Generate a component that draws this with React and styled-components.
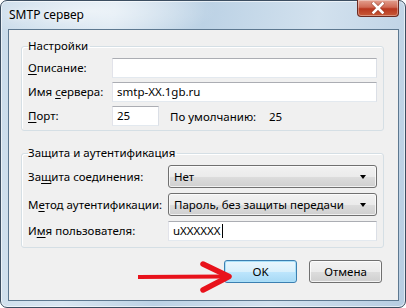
import React from "react";
import styled, { createGlobalStyle } from "styled-components";

const GlobalStyle = createGlobalStyle`
  html, body {
    margin: 0;
    padding: 0;
    background: #ffffff;
  }
  body {
    font-family: "Noto Sans", "Liberation Sans", sans-serif;
    font-size: 11.5px;
    color: #000;
  }
`;

const Frame = styled.div`
  box-sizing: border-box;
  width: 406px;
  height: 308px;
  border: 1px solid #3c4e61;
  border-radius: 7px;
  background:
    radial-gradient(ellipse 180px 40px at 90px 10px, rgba(255, 255, 255, 0.55), rgba(255, 255, 255, 0) 70%),
    linear-gradient(100deg, #c9dbea 0%, #d9e6f1 25%, #bcd2e5 45%, #d2e1ee 70%, #b7cde2 100%);
  box-shadow: inset 0 0 0 1px rgba(255, 255, 255, 0.6);
  padding: 0 6px 6px 7px;
  display: flex;
  flex-direction: column;
`;

const TitleBar = styled.div`
  height: 28px;
  display: flex;
  align-items: flex-start;
  justify-content: space-between;
`;

const Title = styled.div`
  padding: 6px 0 0 1px;
  font-size: 12px;
  line-height: 16px;
  color: #000;
  text-shadow: 0 0 6px rgba(255, 255, 255, 0.9);
`;

const CloseButton = styled.div`
  width: 42px;
  height: 17px;
  margin-top: -1px;
  box-sizing: border-box;
  border: 1px solid #6b2b22;
  border-top: none;
  border-radius: 0 0 4px 4px;
  background: linear-gradient(180deg, #e3a090 0%, #d06a55 45%, #b8371f 55%, #c85a38 100%);
  box-shadow: inset 0 0 0 1px rgba(255, 255, 255, 0.35);
  display: flex;
  align-items: center;
  justify-content: center;
`;

const Client = styled.div`
  position: relative;
  box-sizing: border-box;
  width: 391px;
  height: 272px;
  border: 1px solid #5d7890;
  background: #f0f0f0;
  padding: 8px 14px 0 12px;
  display: flex;
  flex-direction: column;
`;

const Group = styled.fieldset`
  margin: ${(p) => p.$top || 0}px 0 0 0;
  padding: 4px 6px ${(p) => p.$bottom || 4}px 6px;
  border: 1px solid #d5dfe5;
  border-radius: 3px;
  box-shadow: inset 1px 1px 0 #ffffff;
  min-width: 0;
`;

const Legend = styled.legend`
  padding: 0 2px 0 0;
  margin-left: 0;
  font-size: 11.5px;
  line-height: 16px;
  color: #000;
`;

const Rows = styled.div`
  display: grid;
  grid-template-columns: ${(p) => p.$label}px 1fr;
  row-gap: ${(p) => p.$gap}px;
  align-items: center;
`;

const Label = styled.div`
  font-size: 11.5px;
  line-height: 16px;
  white-space: nowrap;
`;

const Key = styled.u`
  text-decoration: underline;
  text-underline-offset: 2px;
`;

const TextBox = styled.div`
  box-sizing: border-box;
  height: 20px;
  width: ${(p) => (p.$width ? `${p.$width}px` : "auto")};
  background: #ffffff;
  border: 1px solid #e3e9ef;
  border-top-color: #abadb3;
  border-left-color: #e2e3ea;
  border-right-color: #dbdfe6;
  padding: 0 4px;
  display: flex;
  align-items: center;
  font-size: 11.5px;
  line-height: 16px;
  white-space: nowrap;
`;

const Caret = styled.span`
  display: inline-block;
  width: 1px;
  height: 14px;
  background: #000;
  margin-left: 1px;
`;

const PortLine = styled.div`
  display: flex;
  align-items: center;
`;

const DefaultLabel = styled.span`
  margin-left: 11px;
  width: 99px;
`;

const Select = styled.div`
  box-sizing: border-box;
  height: 23px;
  border: 1px solid #707070;
  border-radius: 3px;
  background: linear-gradient(180deg, #f2f2f2 0%, #ebebeb 50%, #dddddd 51%, #cfcfcf 100%);
  box-shadow: inset 0 0 0 1px rgba(255, 255, 255, 0.7);
  padding: 0 10px 0 5px;
  display: flex;
  align-items: center;
  justify-content: space-between;
  font-size: 11.5px;
  line-height: 16px;
  white-space: nowrap;
`;

const Arrow = styled.span`
  width: 0;
  height: 0;
  border-left: 3.5px solid transparent;
  border-right: 3.5px solid transparent;
  border-top: 4px solid #000;
  margin-top: 1px;
`;

const ButtonRow = styled.div`
  margin-top: 12px;
  padding-right: 2px;
  display: flex;
  justify-content: flex-end;
  gap: 12px;
`;

const Button = styled.div`
  box-sizing: border-box;
  width: 73px;
  height: 23px;
  border: 1px solid ${(p) => (p.$default ? "#3c7fb1" : "#707070")};
  border-radius: 3px;
  background: ${(p) =>
    p.$default
      ? "linear-gradient(180deg, #eaf6fd 0%, #d9f0fc 50%, #bee6fd 51%, #a7d9f5 100%)"
      : "linear-gradient(180deg, #f2f2f2 0%, #ebebeb 50%, #dddddd 51%, #cfcfcf 100%)"};
  box-shadow: inset 0 0 0 1px ${(p) => (p.$default ? "#a9e0f9" : "rgba(255,255,255,0.75)")};
  display: flex;
  align-items: center;
  justify-content: center;
  font-size: 11.5px;
  line-height: 16px;
`;

const Pointer = styled.svg`
  position: absolute;
  left: 128px;
  top: 231px;
  pointer-events: none;
`;

export default function App() {
  return (
    <>
      <GlobalStyle />
      <Frame>
        <TitleBar>
          <Title>SMTP сервер</Title>
          <CloseButton>
            <svg width="14" height="12" viewBox="0 0 14 12">
              <path d="M2.5 1.5 L11.5 10.5 M11.5 1.5 L2.5 10.5" stroke="#7a2a1a" strokeWidth="4" strokeLinecap="square" opacity="0.45" />
              <path d="M2.5 1.5 L11.5 10.5 M11.5 1.5 L2.5 10.5" stroke="#ffffff" strokeWidth="2.6" strokeLinecap="square" />
            </svg>
          </CloseButton>
        </TitleBar>
        <Client>
          <Group $bottom={4}>
            <Legend>Настройки</Legend>
            <Rows $label={84} $gap={4}>
              <Label><Key>О</Key>писание:</Label>
              <TextBox />
              <Label>Имя <Key>с</Key>ервера:</Label>
              <TextBox>smtp-XX.1gb.ru</TextBox>
              <Label><Key>П</Key>орт:</Label>
              <PortLine>
                <TextBox $width={47}>25</TextBox>
                <DefaultLabel>По умолчанию:</DefaultLabel>
                <span>25</span>
              </PortLine>
            </Rows>
          </Group>
          <Group $top={14} $bottom={6}>
            <Legend>Защита и аутентификация</Legend>
            <Rows $label={140} $gap={5}>
              <Label>За<Key>щ</Key>ита соединения:</Label>
              <Select>
                <span>Нет</span>
                <Arrow />
              </Select>
              <Label>М<Key>е</Key>тод аутентификации:</Label>
              <Select>
                <span>Пароль, без защиты передачи</span>
                <Arrow />
              </Select>
              <Label>И<Key>м</Key>я пользователя:</Label>
              <TextBox>
                uXXXXXX<Caret />
              </TextBox>
            </Rows>
          </Group>
          <ButtonRow>
            <Button $default>OK</Button>
            <Button>Отмена</Button>
          </ButtonRow>
          <Pointer width="100" height="32" viewBox="0 0 100 32">
            <path d="M1 14 L88 13.5 L88 17.5 L1 18 Z" fill="#e8121b" />
            <path d="M66 3 L92 15.5 L66 29" fill="none" stroke="#e8121b" strokeWidth="5.5" strokeLinecap="round" strokeLinejoin="round" />
          </Pointer>
        </Client>
      </Frame>
    </>
  );
}
